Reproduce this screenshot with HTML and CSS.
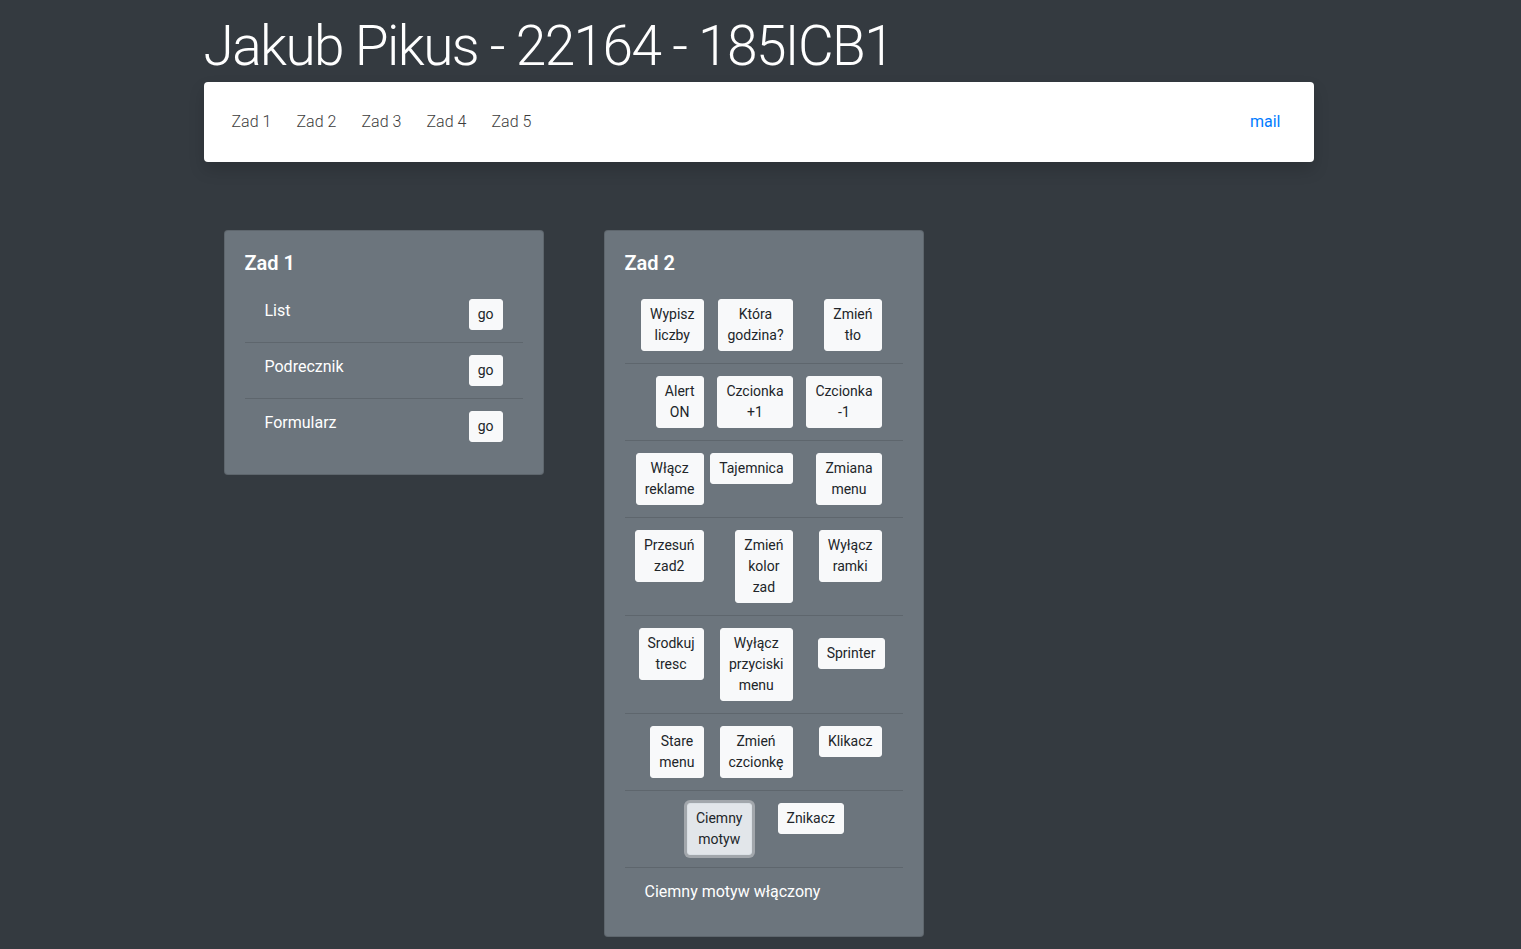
FILE: index.html
```html
<!DOCTYPE html>
<html lang="pl">
<head>
<meta charset="utf-8">
<title>Jakub Pikus</title>
<link rel="stylesheet" href="styles.css">
</head>
<body>
<div class="container">
  <h1 class="title">Jakub Pikus - 22164 - 185ICB1</h1>
  <nav class="navbar">
    <ul class="nav-links">
      <li><a href="#">Zad 1</a></li>
      <li><a href="#">Zad 2</a></li>
      <li><a href="#">Zad 3</a></li>
      <li><a href="#">Zad 4</a></li>
      <li><a href="#">Zad 5</a></li>
    </ul>
    <a class="mail" href="#">mail</a>
  </nav>

  <div class="cards">
    <section class="card">
      <h5 class="card-title">Zad 1</h5>
      <ul class="list">
        <li class="item item-link"><span>List</span><button class="btn">go</button></li>
        <li class="item item-link"><span>Podrecznik</span><button class="btn">go</button></li>
        <li class="item item-link"><span>Formularz</span><button class="btn">go</button></li>
      </ul>
    </section>

    <section class="card">
      <h5 class="card-title">Zad 2</h5>
      <ul class="list">
        <li class="item btn-row">
          <button class="btn">Wypisz<br>liczby</button>
          <button class="btn">Która<br>godzina?</button>
          <button class="btn">Zmień<br>tło</button>
        </li>
        <li class="item btn-row">
          <button class="btn">Alert<br>ON</button>
          <button class="btn">Czcionka<br>+1</button>
          <button class="btn">Czcionka<br>-1</button>
        </li>
        <li class="item btn-row">
          <button class="btn">Włącz<br>reklame</button>
          <button class="btn">Tajemnica</button>
          <button class="btn">Zmiana<br>menu</button>
        </li>
        <li class="item btn-row">
          <button class="btn">Przesuń<br>zad2</button>
          <button class="btn">Zmień<br>kolor<br>zad</button>
          <button class="btn">Wyłącz<br>ramki</button>
        </li>
        <li class="item btn-row">
          <button class="btn">Srodkuj<br>tresc</button>
          <button class="btn">Wyłącz<br>przyciski<br>menu</button>
          <button class="btn btn-sprinter">Sprinter</button>
        </li>
        <li class="item btn-row">
          <button class="btn">Stare<br>menu</button>
          <button class="btn">Zmień<br>czcionkę</button>
          <button class="btn">Klikacz</button>
        </li>
        <li class="item btn-row-two">
          <button class="btn btn-active">Ciemny<br>motyw</button>
          <button class="btn">Znikacz</button>
        </li>
        <li class="item status">Ciemny motyw włączony</li>
      </ul>
    </section>
  </div>
</div>
</body>
</html>
```

FILE: styles.css
```css
* { box-sizing: border-box; }

html, body {
  margin: 0;
  padding: 0;
}

body {
  background: #343a40;
  font-family: "Segoe UI", Roboto, "Noto Sans", "Liberation Sans", sans-serif;
  font-size: 16px;
  line-height: 1.5;
  color: #212529;
}

.container {
  width: 1114px;
  padding-right: 4px;
  margin: 0 auto;
}

.title {
  margin: 0;
  padding-top: 13px;
  font-size: 55px;
  font-weight: 300;
  line-height: 66px;
  color: #fff;
  letter-spacing: -1.6px;
  white-space: nowrap;
}

.navbar {
  margin-top: 3px;
  height: 80px;
  background: #fff;
  border-radius: 4px;
  box-shadow: 0 8px 16px rgba(0, 0, 0, 0.15);
  display: flex;
  align-items: center;
  justify-content: space-between;
  padding: 0 33px 0 28px;
}

.nav-links {
  list-style: none;
  margin: 0;
  padding: 0;
  display: grid;
  grid-auto-flow: column;
  grid-auto-columns: 65px;
}

.nav-links a {
  color: #3c3c3c;
  font-weight: 300;
  text-decoration: none;
  font-size: 16px;
}

.mail {
  color: #007bff;
  text-decoration: none;
  font-size: 16px;
}

.cards {
  display: flex;
  align-items: flex-start;
  gap: 60px;
  margin-top: 68px;
  padding-left: 20px;
}

.card {
  width: 320px;
  background: #6c757d;
  border: 1px solid rgba(0, 0, 0, 0.125);
  border-radius: 4px;
  padding: 20px;
  color: #fff;
}

.card-title {
  margin: 0 0 12px;
  font-size: 20px;
  line-height: 24px;
  font-weight: 600;
  color: #fff;
}

.list {
  list-style: none;
  margin: 0;
  padding: 0;
}

.item {
  padding: 12px 20px;
  border-top: 1px solid rgba(0, 0, 0, 0.125);
}

.item:first-child {
  border-top: none;
}

.item-link {
  display: flex;
  justify-content: space-between;
  align-items: flex-start;
  font-size: 16px;
  line-height: 24px;
}

.btn {
  font-family: inherit;
  font-size: 14px;
  line-height: 21px;
  padding: 4px 8px;
  border: 1px solid #f8f9fa;
  border-radius: 3px;
  background: #f8f9fa;
  color: #212529;
  text-align: center;
  white-space: nowrap;
  cursor: pointer;
}

.btn-row {
  display: grid;
  grid-template-columns: 59px 89px 89px;
  justify-items: end;
  align-items: start;
}

.btn-row-two {
  display: grid;
  grid-template-columns: 107px auto;
  column-gap: 26px;
  align-items: start;
}

.btn-row-two .btn:first-child {
  justify-self: end;
}

.btn-row-two .btn:last-child {
  justify-self: start;
}

.btn-sprinter {
  margin-top: 10px;
  margin-right: -3px;
}

.btn-active {
  background: #e2e6ea;
  border-color: #dae0e5;
  box-shadow: 0 0 0 3px rgba(216, 217, 219, 0.5);
}

.status {
  font-size: 16px;
  line-height: 24px;
  color: #fff;
}
```
